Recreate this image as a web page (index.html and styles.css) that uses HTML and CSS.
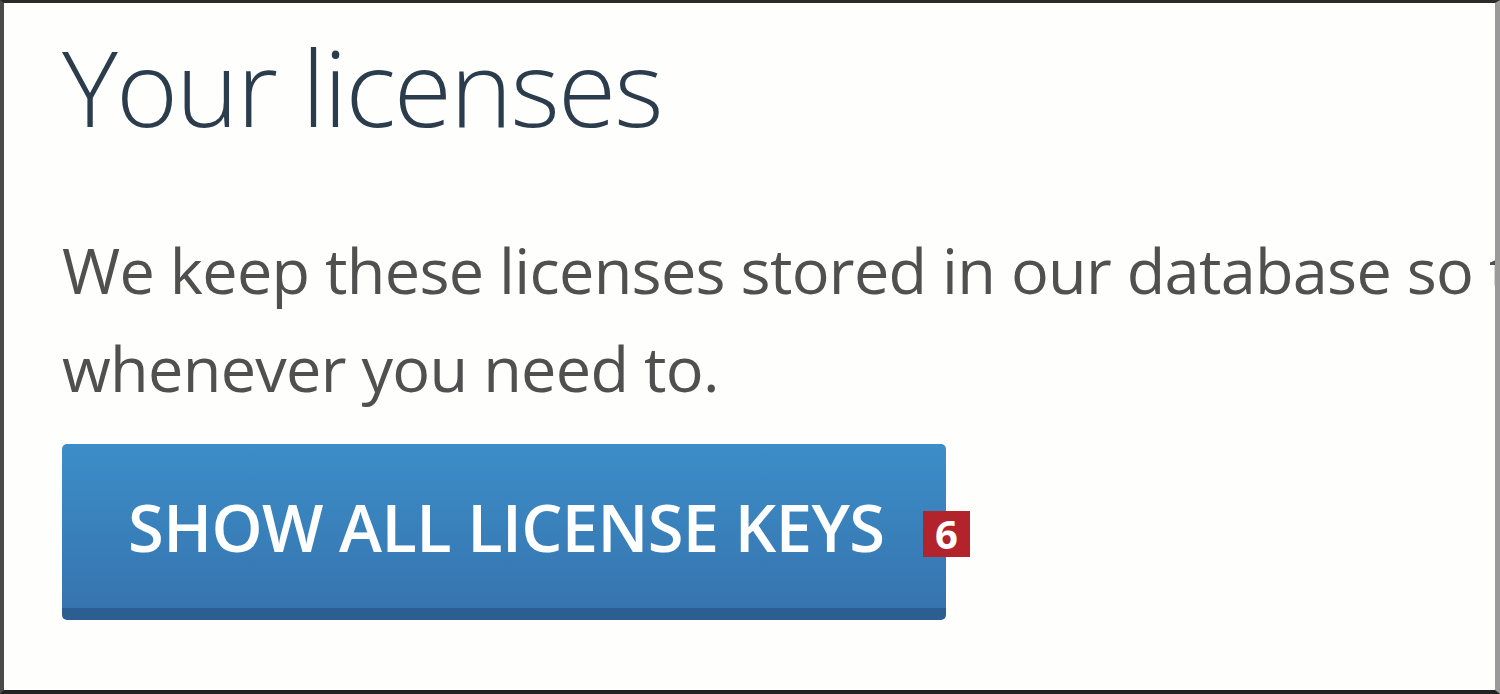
FILE: index.html
```html
<!DOCTYPE html>
<html lang="en">

<head>
    <meta charset="UTF-8">
    <meta name="viewport" content="width=device-width, initial-scale=1.0">
    <title>Your licenses</title>
    <link rel="stylesheet" href="styles.css">
</head>

<body>
    <div id="licenses">
        <h1>Your licenses</h1>

        <p class="intro">We keep these licenses stored in our database so that you can access them<br>
            whenever you need to.</p>

        <div class="button-wrap">
            <a id="keys-btn" href="#">Show all license keys</a>
            <span class="badge">6</span>
        </div>
    </div>
</body>

</html>
```

FILE: styles.css
```css
body {
    font-family: "Open Sans", Arial, sans-serif;
    margin: 0;
    padding: 0;
    background-color: #fff;
}

#licenses {
    box-sizing: border-box;
    width: 1500px;
    height: 694px;
    overflow: hidden;
    padding: 0 0 0 58px;
    border-top: 3px solid #2a2a2a;
    border-left: 4px solid #4a4a4a;
    border-bottom: 4px solid #222;
    border-right: 5px solid #9a9a9a;
    background-color: #fefefd;
}

#licenses h1 {
    font-size: 106px;
    font-weight: 300;
    line-height: 1;
    color: #2b3d4d;
    margin: 30px 0 0 0;
    letter-spacing: -2px;
}

.intro {
    font-size: 63px;
    font-weight: 400;
    line-height: 98px;
    color: #505050;
    letter-spacing: -0.7px;
    white-space: nowrap;
    margin: 82px 0 0 0;
}

.button-wrap {
    position: relative;
    display: inline-block;
    margin-top: 27px;
}

#keys-btn {
    display: inline-block;
    width: 884px;
    box-sizing: border-box;
    padding: 44px 0 42px 66px;
    font-size: 65px;
    font-weight: 600;
    line-height: 78px;
    letter-spacing: -0.6px;
    color: #fff;
    text-transform: uppercase;
    text-decoration: none;
    background: linear-gradient(#3c8ec8, #3674af);
    border-bottom: 12px solid #2c5e92;
    border-radius: 5px;
}

.badge {
    position: absolute;
    left: 861px;
    top: 67px;
    width: 47px;
    height: 46px;
    background-color: #b2232b;
    color: #fff;
    font-size: 40px;
    font-weight: 700;
    line-height: 46px;
    text-align: center;
}
```
